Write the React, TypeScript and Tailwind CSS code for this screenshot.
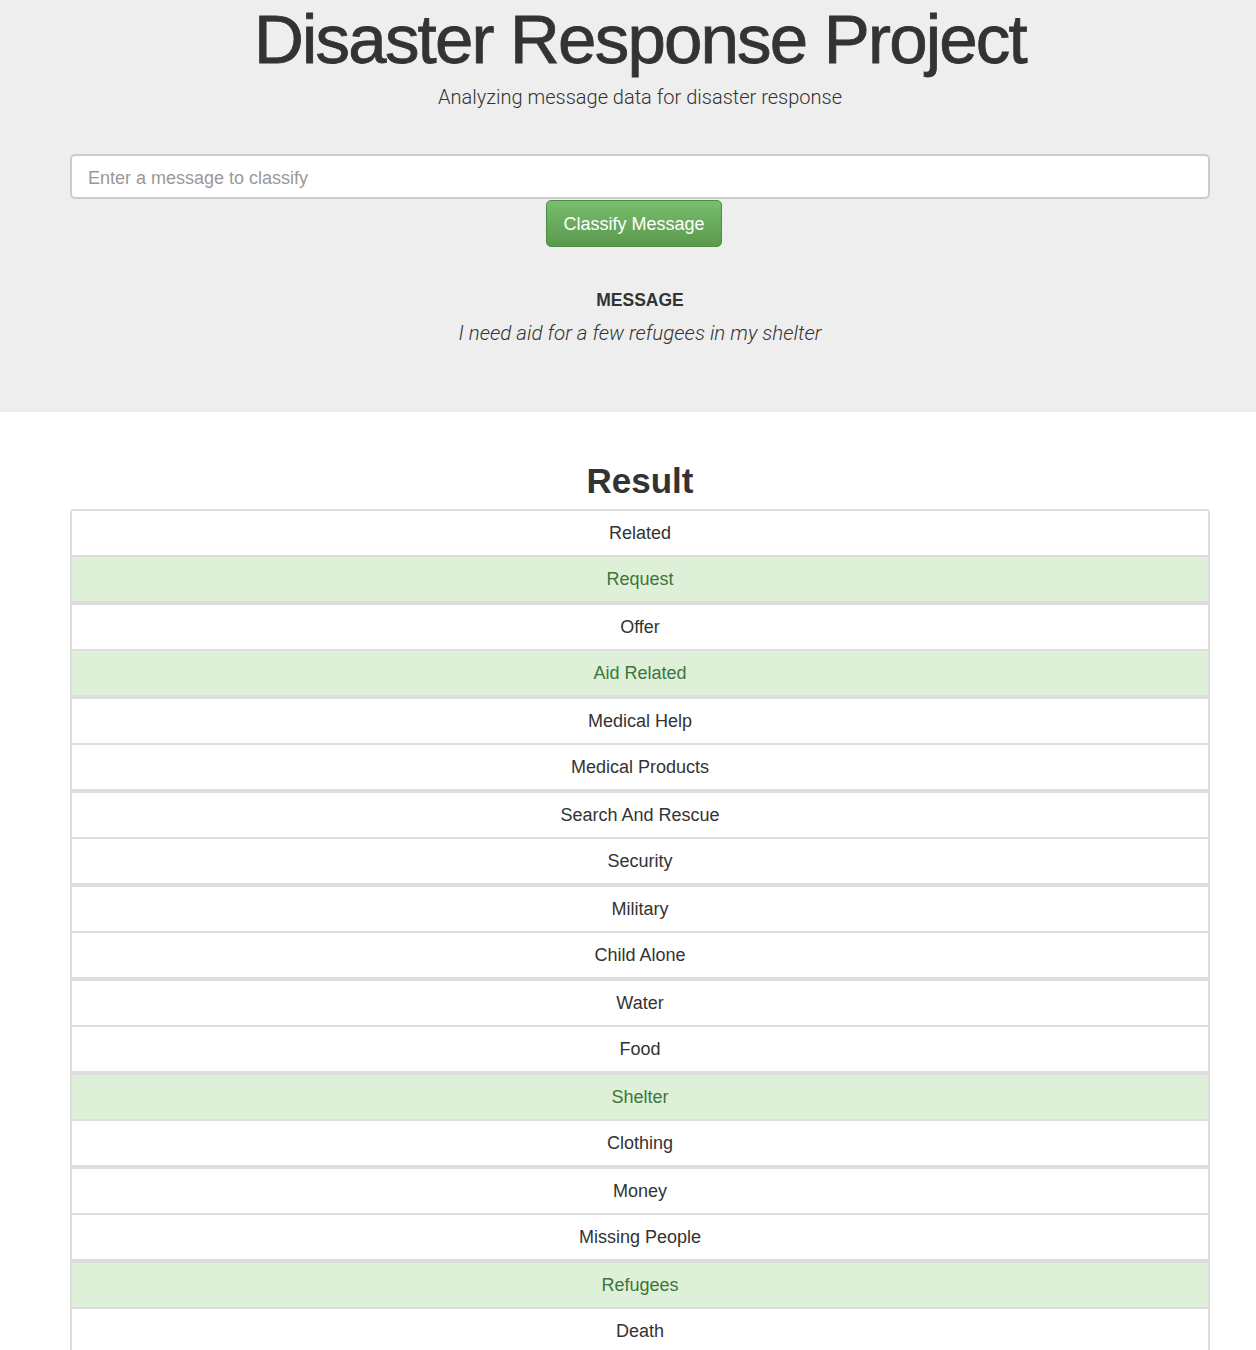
import React from 'react';

type Category = { name: string; hit: boolean };

const categories: Category[] = [
  { name: 'Related', hit: false },
  { name: 'Request', hit: true },
  { name: 'Offer', hit: false },
  { name: 'Aid Related', hit: true },
  { name: 'Medical Help', hit: false },
  { name: 'Medical Products', hit: false },
  { name: 'Search And Rescue', hit: false },
  { name: 'Security', hit: false },
  { name: 'Military', hit: false },
  { name: 'Child Alone', hit: false },
  { name: 'Water', hit: false },
  { name: 'Food', hit: false },
  { name: 'Shelter', hit: true },
  { name: 'Clothing', hit: false },
  { name: 'Money', hit: false },
  { name: 'Missing People', hit: false },
  { name: 'Refugees', hit: true },
  { name: 'Death', hit: false },
];

const App: React.FC = () => {
  return (
    <div className="h-[1350px] overflow-hidden bg-white text-[#333] font-['Liberation_Sans',Arial,sans-serif]">
      {/* jumbotron */}
      <div className="bg-[#eeeeee] pb-[65px]">
        <div className="ml-[70px] w-[1140px] flex flex-col items-center">
          <h1 className="mt-[4px] text-[69px] leading-[72px] tracking-[-1.8px] [-webkit-text-stroke:0.8px_#333]">
            Disaster Response Project
          </h1>
          <p className="mt-[7px] text-[20px] leading-[28px] font-light font-['Roboto',sans-serif]">
            Analyzing message data for disaster response
          </p>

          <input
            type="text"
            placeholder="Enter a message to classify"
            className="mt-[43px] w-full h-[45px] rounded-[5px] border-2 border-[#cccccc] bg-white px-[16px] pt-[3px] text-[18px] placeholder:text-[#999] outline-none"
          />
          <div className="w-full flex justify-center pr-[12px]">
            <button className="mt-[1px] w-[176px] h-[47px] pt-[2px] rounded-[5px] border border-[#4f8a46] bg-gradient-to-b from-[#79bd6e] to-[#5a9a4e] text-white text-[18px]">
              Classify Message
            </button>
          </div>

          <h4 className="mt-[43px] text-[17.5px] leading-[20px] font-bold">MESSAGE</h4>
          <p className="mt-[9px] text-[20.5px] leading-[28px] italic font-light font-['Roboto',sans-serif]">
            I need aid for a few refugees in my shelter
          </p>
        </div>
      </div>

      {/* results */}
      <div className="ml-[70px] w-[1140px] flex flex-col items-center">
        <h2 className="mt-[49px] text-[35px] leading-[40px] font-bold">Result</h2>
        <ul className="mt-[8px] w-full border-x-2 border-t-2 border-[#dddddd] rounded-t-[4px]">
          {categories.map((c, i) => (
            <li
              key={c.name}
              className={
                'h-[44px] flex items-center justify-center text-[18px] border-[#dddddd] ' +
                (i % 2 === 0 ? 'border-b-2 ' : 'border-b-4 ') +
                (c.hit ? 'bg-[#dff0d8] text-[#3c763d]' : 'bg-white text-[#333]')
              }
              style={{ boxSizing: 'content-box' }}
            >
              {c.name}
            </li>
          ))}
        </ul>
      </div>
    </div>
  );
};

export default App;
